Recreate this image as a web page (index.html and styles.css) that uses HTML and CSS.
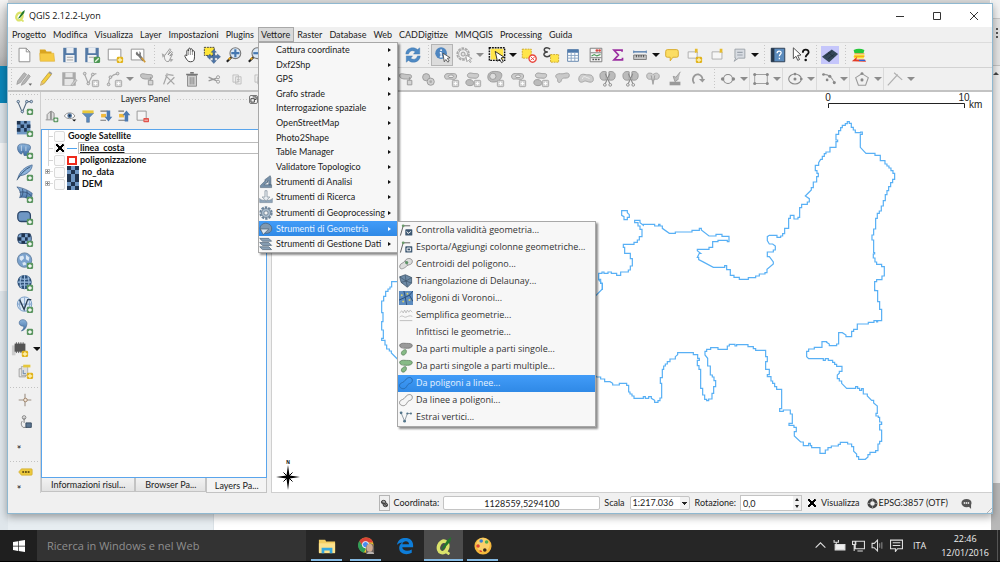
FILE: index.html
```html
<!DOCTYPE html>
<html lang="it">
<head>
<meta charset="utf-8">
<title>QGIS 2.12.2-Lyon</title>
<link rel="stylesheet" href="styles.css">
</head>
<body>
<svg class="sprite" aria-hidden="true">
  <defs>
    <linearGradient id="g-blue" x1="0" y1="0" x2="0" y2="1"><stop offset="0" stop-color="#8db4dc"/><stop offset="1" stop-color="#3f6ea3"/></linearGradient>
    <pattern id="chess" width="8" height="8" patternUnits="userSpaceOnUse"><rect width="8" height="8" fill="#6f97c4"/><path d="M0 0h4v4H0zM4 4h4v4H4z" fill="#1f3450"/></pattern>
    <g id="plus"><rect x="12" y="12" width="7" height="7" rx="1.5" fill="#5a9560"/><path d="M15.500 13.500v4M13.500 15.500h4" stroke="#fff" stroke-width="1.500"/></g>
    <g id="star"><rect x="12" y="12" width="7" height="7" rx="1.500" fill="#e0b21c"/><path d="M15.500 13v5M13 15.500h5" stroke="#fff3b0" stroke-width="1.500"/></g>
    <g id="gbox"><rect x="11.500" y="11.500" width="7" height="7" rx="1" fill="#d6d6d6" stroke="#a4a4a4"/><path d="M15 13v4M13 15h4" stroke="#fff"/></g>
    <g id="blob"><path d="M3 4c3-2 5 0 8 0s6-1 6 3-4 4-6 3-3 1-3 4-4 3-4 0 2-3 1-5-4-3-2-5z"/></g>
  </defs>
  <symbol id="i-new" viewBox="0 0 20 20"><path d="M4.500 2.500h8l4 4v11h-12z" fill="#fff" stroke="#888"/><path d="M12.500 2.500v4h4" fill="none" stroke="#888"/></symbol>
  <symbol id="i-open" viewBox="0 0 20 20"><path d="M2 4h6l1.500 2H15v3H6l-4 7z" fill="#d9a520"/><path d="M2 8h15.500l1 9H2.500z" fill="#f6cb45" stroke="#dca92a" stroke-width=".6"/></symbol>
  <symbol id="i-save" viewBox="0 0 20 20"><path d="M2.500 2h15v16h-15z" fill="#5379a5"/><path d="M6 2h8v6H6z" fill="#e9edf2"/><path d="M5 10h10v8H5z" fill="#f4f4f4"/><path d="M6.500 12.500h7M6.500 15.500h7" stroke="#999"/></symbol>
  <symbol id="i-saveas" viewBox="0 0 20 20"><path d="M2.500 2h15v16h-15z" fill="#5379a5"/><path d="M6 2h8v6H6z" fill="#e9edf2"/><path d="M5 10h10v8H5z" fill="#f4f4f4"/><path d="M6.500 12.500h6" stroke="#999"/><rect x="12" y="12" width="7" height="7" rx="1.500" fill="#4c9654"/><path d="M13.500 17.500l4-4" stroke="#e5f4dd" stroke-width="1.500"/></symbol>
  <symbol id="i-composer" viewBox="0 0 20 20"><path d="M2.500 3.500h14v12h-14z" fill="#fff" stroke="#8c8c8c"/><use href="#star"/></symbol>
  <symbol id="i-manager" viewBox="0 0 20 20"><path d="M2.500 3.500h14v12h-14z" fill="#fff" stroke="#8c8c8c"/><path d="M9 6c-2 1-2 4 1 5l5 6 2-1-4-6c1-2 0-4-2-4l1 2-1.500 1z" fill="#777"/><path d="M14 13l4 5" stroke="#d09a38" stroke-width="2"/></symbol>
  <symbol id="i-touch" viewBox="0 0 20 20"><path d="M6 11l6-8 1 1-3 6 4-4 1 1-3 4 3-2-4 8c-3 1-5-1-5-6z" fill="#f3f3f3" stroke="#888" stroke-width=".9"/><path d="M3 8l4 2-3 3zM12 14l4 1-3 3z" fill="#aaa"/></symbol>
  <symbol id="i-pan" viewBox="0 0 20 20"><path d="M6.500 11V5.500c0-1.500 2-1.500 2 0V3.500c0-1.500 2-1.500 2 0V4c.5-1.500 2.200-1 2.200.5V6c.6-1.200 2.300-.8 2.300.7V12c0 4-1 5.500-4.500 5.500-3 0-3.500-1.500-6-5.500-1-1.800.8-2.600 2-1z" fill="#fff" stroke="#333"/><path d="M8.500 5v5M10.500 4v6M12.700 5v5" stroke="#666" stroke-width=".7"/></symbol>
  <symbol id="i-pansel" viewBox="0 0 20 20"><path d="M1.500 1.500h11v9h-11z" fill="#ffe638" stroke="#333" stroke-dasharray="2 1"/><path d="M12 4l3 3h-2v3.500h3V9l3.500 3-3.500 3v-2h-3v3h2l-3 3.500L9 16h2v-3H8v2l-3.500-3L8 9v2h3V7H9z" fill="#4b74a8" stroke="#27476f" stroke-width=".4"/></symbol>
  <symbol id="i-zoomin" viewBox="0 0 20 20"><circle cx="11.500" cy="8" r="6" fill="#dbe8f5" stroke="#777" stroke-width="1.200"/><path d="M11.500 3.500v9M7 8h9" stroke="#4577b0" stroke-width="2.400"/><path d="M7 12.500L2 17.500" stroke="#222" stroke-width="2.400"/><path d="M6 13l-2 2" stroke="#e0a526" stroke-width="2"/></symbol>
  <symbol id="i-zoomout" viewBox="0 0 20 20"><circle cx="11.500" cy="8" r="6" fill="#dbe8f5" stroke="#777" stroke-width="1.200"/><path d="M7 8h9" stroke="#4577b0" stroke-width="2.400"/><path d="M7 12.500L2 17.500" stroke="#222" stroke-width="2.400"/><path d="M6 13l-2 2" stroke="#e0a526" stroke-width="2"/></symbol>
  <symbol id="i-refresh" viewBox="0 0 20 20"><path d="M2 9c0-7 9-9 13-5l2.500-2v7h-7l2-2.500C9.500 4 6 5.500 5 9zM18 11c0 7-9 9-13 5l-2.500 2v-7h7l-2 2.500c3 2.500 6.500 1 7.500-2.500z" fill="#4f8ac4" stroke="#3a6fa6" stroke-width=".4"/></symbol>
  <symbol id="i-identify" viewBox="0 0 20 20"><circle cx="9" cy="8" r="6.500" fill="#4f86c0"/><path d="M9 7v5M7.500 7.500H9M7.500 12h3" stroke="#fff" stroke-width="1.400"/><circle cx="9" cy="4.600" r="1" fill="#fff"/><path d="M11 8l8 5-3 .7 2 3-1.500 1.300-2.200-3-1.800 2.500z" fill="#fff" stroke="#444" stroke-width=".9"/></symbol>
  <symbol id="i-action" viewBox="0 0 20 20"><circle cx="9" cy="9" r="6.500" fill="none" stroke="#aaa" stroke-width="2" stroke-dasharray="3 1"/><circle cx="9" cy="9" r="5" fill="#eee" stroke="#aaa"/><circle cx="9" cy="9" r="2.200" fill="#e2e2e2" stroke="#999"/><path d="M12 10l7 4-3 .7 2 3-1 .8-2-3-1.800 2z" fill="#fff" stroke="#999" stroke-width=".9"/></symbol>
  <symbol id="i-select" viewBox="0 0 20 20"><path d="M3 3h14v12H3z" fill="#ffe54a"/><path d="M1.500 2h17v14h-17z" fill="none" stroke="#111" stroke-width="1.600" stroke-dasharray="2 1"/><path d="M8 6l10 6.500-3.500.8 2.500 4-2 1.200-2.300-4-2.200 2.500z" fill="#fff" stroke="#222"/></symbol>
  <symbol id="i-deselect" viewBox="0 0 20 20"><path d="M2.500 3.500h10v10h-10z" fill="#ffe54a" stroke="#c9a52a" stroke-dasharray="2 1"/><circle cx="14" cy="14" r="4" fill="#fff" stroke="#e8453c" stroke-width="1.500"/><path d="M11.500 16l5-4M12 12l4 4" stroke="#e8453c"/></symbol>
  <symbol id="i-expr" viewBox="0 0 20 20"><path d="M9 3.500C5.500.500 1 2.500 3 5.500c.7 1 2 1.200 3.500 1.200C2.500 6.700 1.500 8.700 2.500 10.500s5 2 7-.5" fill="none" stroke="#444" stroke-width="1.700"/><path d="M9.500 9.500h9v8.500h-9z" fill="#ffe54a" stroke="#c9a52a" stroke-dasharray="2 1"/></symbol>
  <symbol id="i-table" viewBox="0 0 20 20"><path d="M4 4h12v13H4z" fill="#fff" stroke="#5b7fa9"/><path d="M4 4h12v3.500H4z" fill="#4e79ab"/><path d="M4 10.500h12M4 13.500h12M8 7v10M12 7v10" stroke="#87a3c3"/></symbol>
  <symbol id="i-calc" viewBox="0 0 20 20"><path d="M3.500 2.500h13v15h-13z" fill="#f5f5f5" stroke="#777"/><path d="M4 7.500h12M4 13h12" stroke="#777"/><circle cx="11" cy="5" r="1.500" fill="#d4453d"/><circle cx="14" cy="5" r="1.500" fill="#d4453d"/><path d="M5 11l3-1.500 3 1.500 4-1.500" stroke="#4a9a57" fill="none" stroke-width="1.300"/><path d="M6 15h8" stroke="#555" stroke-width="1.500" stroke-dasharray="2 1"/></symbol>
  <symbol id="i-sum" viewBox="0 0 20 20"><path d="M14.500 6.500V4.500h-9l5 5.500-5 5.500h9.500v-2.500" fill="none" stroke="#9b2fa0" stroke-width="1.900"/></symbol>
  <symbol id="i-measure" viewBox="0 0 20 20"><path d="M3 6.500h14" stroke="#4e79ab" stroke-width="1.500"/><path d="M3 5v3M17 5v3" stroke="#4e79ab"/><path d="M3 10h14v5H3z" fill="#c6c6c6" stroke="#777"/><path d="M6 10v2.500M8.700 10v2.500M11.300 10v2.500M14 10v2.500" stroke="#444"/></symbol>
  <symbol id="i-tip" viewBox="0 0 20 20"><path d="M5 4h10q2 0 2 2v5q0 1.500-2 1.500h-4l-3 4v-4H5q-2 0-2-1.500V6q0-2 2-2z" fill="#fbdd63" stroke="#d5a827"/></symbol>
  <symbol id="i-bmnew" viewBox="0 0 20 20"><path d="M3.500 6.500h10v7h-10z" fill="#f6f6f6" stroke="#aaa"/><path d="M11 3h3v5l-1.500-1L11 8z" fill="#e5bb2e"/><use href="#star"/></symbol>
  <symbol id="i-bm" viewBox="0 0 20 20"><path d="M4.500 6.500h11v8h-11z" fill="#f6f6f6" stroke="#aaa"/><path d="M13 3h3v5l-1.500-1L13 8z" fill="#e5bb2e"/></symbol>
  <symbol id="i-annot" viewBox="0 0 20 20"><path d="M5.500 3.500h11v10h-7l-5 3.500 2-3.500h-1z" fill="#d8dce2" stroke="#9a9fa6"/><path d="M8 7h6M8 10h6" stroke="#9aa2ac" stroke-width="1.300"/></symbol>
  <symbol id="i-help" viewBox="0 0 20 20"><path d="M2.500 2.500h15v15h-15z" fill="#5b8bbd" stroke="#27384c"/><path d="M2.500 2.500h3.500v15H2.500z" fill="#27384c"/><path d="M9 8c0-3 4.500-3 4.500-.5 0 1.500-2 1.800-2 3.800M11.500 13v1.800" stroke="#fff" stroke-width="1.400" fill="none"/></symbol>
  <symbol id="i-what" viewBox="0 0 20 20"><path d="M1.500 2l8.500 8-3.800.5 2.200 4.500-2 1-2-4.500L1.500 14z" fill="#fff" stroke="#444"/><path d="M12 7.500c0-4.500 6.500-4.500 6.500-.5 0 2.500-3.300 2.500-3.300 5.500" fill="none" stroke="#111" stroke-width="2"/><circle cx="15.200" cy="15.500" r="1.400" fill="#111"/></symbol>
  <symbol id="i-plug" viewBox="0 0 20 20"><path d="M0 0h20v20H0z" fill="#c5c6fb"/><path d="M1 12l11-8 7 5-10 9z" fill="#33475b"/><path d="M5 11l7-5M8 14l7-5M8 7l6 5" stroke="#1f2b38" stroke-width=".8"/></symbol>
  <symbol id="i-layers3" viewBox="0 0 20 20"><path d="M4 4.500q6-3 12 0l-1 3.500H5z" fill="#25c83a"/><path d="M5 9.500h11v1.500l-1 3H5l-1-2z" fill="#fbe02a"/><path d="M5 8.500h11M5 11.500h11" stroke="#ee8a1f" stroke-width=".8"/><path d="M2 17l6-5-1 3h9l2 2.500z" fill="#e43a25"/><path d="M10 16h7" stroke="#2d62d6" stroke-width="1.300"/></symbol>

  <symbol id="i-edits" viewBox="0 0 20 20"><path d="M2 16l1-4 7-9 3 2-7 9zM7 17l1-3 7-9 2 2-6 8z" fill="#b5b5b5" stroke="#8e8e8e" stroke-width=".7"/><path d="M15 15h4l-2 2.500z" fill="#666"/></symbol>
  <symbol id="i-pencil" viewBox="0 0 20 20"><path d="M4 17l1-4 8-10 3 2-8 10z" fill="#f4cf3f" stroke="#a8862a" stroke-width=".7"/><path d="M4 17l1-4 2.500 2z" fill="#d8b78a"/><path d="M13 3l3 2 1-1.500-3-2z" fill="#999"/></symbol>
  <symbol id="i-gsave" viewBox="0 0 20 20"><path d="M2.500 2.500h15v15h-15z" fill="#aaa"/><path d="M6 3h8v5H6zM5 10h10v7H5z" fill="#e6e6e6"/><path d="M12 17l5-7 2 1.500-5 6z" fill="#ccc" stroke="#999" stroke-width=".6"/></symbol>
  <symbol id="i-node" viewBox="0 0 20 20"><path d="M3 5l4 10L12 5l4-1" fill="none" stroke="#aaa" stroke-width="1.300"/><g fill="#ddd" stroke="#999"><circle cx="3" cy="4" r="1.500"/><circle cx="7" cy="15" r="1.500"/><circle cx="12" cy="5" r="1.500"/></g><use href="#gbox"/></symbol>
  <symbol id="i-curve" viewBox="0 0 20 20"><path d="M4 16C4 9 8 5 14 4" fill="none" stroke="#aaa" stroke-width="1.300"/><g fill="#ddd" stroke="#999"><circle cx="4" cy="16" r="1.500"/><circle cx="6" cy="8" r="1.500"/><circle cx="14" cy="4" r="1.500"/></g><use href="#gbox"/></symbol>
  <symbol id="i-gblob" viewBox="0 0 20 20"><path d="M3 5c2-2 5 0 8 0s6 0 5 3-4 2-7 2-7-1-6-5z" fill="#c4c4c4" stroke="#999"/><path d="M11.500 11.500h5v5h-5z" fill="#d5d5d5" stroke="#999"/><path d="M14 8v3" stroke="#999" stroke-width="1.500"/></symbol>
  <symbol id="i-gnode" viewBox="0 0 20 20"><path d="M4 16L8 5l7 1M6 6l10 10M16 8L8 16" fill="none" stroke="#a5a5a5" stroke-width="1.400"/><circle cx="8" cy="5" r="1.500" fill="#bbb"/></symbol>
  <symbol id="i-trash" viewBox="0 0 20 20"><path d="M5 6h10v12H5z" fill="#cfcfcf" stroke="#888"/><path d="M3.500 5h13M8 3h4" stroke="#777" stroke-width="1.600"/><path d="M8 8v8M10 8v8M12 8v8" stroke="#888"/></symbol>
  <symbol id="i-cut" viewBox="0 0 20 20"><path d="M4 8l9 4M4 12l9-3" stroke="#999" stroke-width="1.500"/><circle cx="14.500" cy="8" r="1.700" fill="none" stroke="#999"/><circle cx="14.500" cy="13" r="1.700" fill="none" stroke="#999"/></symbol>
  <symbol id="i-copy" viewBox="0 0 20 20"><path d="M5.500 5.500h6v8h-6zM8.500 7.500h6v8h-6z" fill="#eee" stroke="#bcbcbc"/><path d="M10 10.500h3M10 12.500h3" stroke="#bbb"/></symbol>
  <symbol id="i-donut" viewBox="0 0 20 20"><circle cx="8" cy="8" r="4" fill="#c4c4c4" stroke="#999"/><circle cx="13" cy="13" r="4" fill="#d0d0d0" stroke="#999"/><circle cx="13" cy="13" r="1.500" fill="#aaa"/></symbol>
  <symbol id="i-gring" viewBox="0 0 20 20"><path d="M3 8c-1-5 5-4 8-4s6 0 5 4-5 2-8 2-4 1-5-2z" fill="#ccc" stroke="#999"/><ellipse cx="10" cy="7" rx="3" ry="1.500" fill="#f0f0f0" stroke="#999"/><use href="#gbox"/></symbol>
  <symbol id="i-gtwo" viewBox="0 0 20 20"><path d="M4 5c2-3 5-1 8-1s5 0 4 3-4 2-7 2-6-1-5-4z" fill="#ccc" stroke="#999"/><path d="M2 14c0-3 3-4 6-3s4 5 1 6-7 0-7-3z" fill="#bbb" stroke="#999"/><use href="#gbox"/></symbol>
  <symbol id="i-gbig" viewBox="0 0 20 20"><path d="M1 9c-1-8 7-8 12-7s4 6 1 9-12 4-13-2z" fill="#bbb" stroke="#999"/><circle cx="6.500" cy="7" r="3.500" fill="#ddd" stroke="#999"/><use href="#gbox"/></symbol>
  <symbol id="i-gshape" viewBox="0 0 20 20"><path d="M3 5c3-2 5 0 8-1s6-1 6 2-3 3-5 3-3 0-4 3-4 2-4 0 0-2-1-3-2-3 0-4z" fill="#c9c9c9" stroke="#a0a0a0"/></symbol>
  <symbol id="i-gbean" viewBox="0 0 20 20"><path d="M2 10c0-4 3-6 7-5s8-1 9 4-3 5-6 4-3-1-5 0-5 1-5-3z" fill="#ccc" stroke="#a0a0a0"/><path d="M6 10c0-3 3-3 4-2s3 0 4 2" fill="none" stroke="#eee"/></symbol>
  <symbol id="i-gsplit" viewBox="0 0 20 20"><path d="M1 6c0-4 4-5 7-4v9c-4 1-7 0-7-5zM18 6c0-4-4-5-7-4v9c4 1 7 0 7-5z" fill="#bbb" stroke="#999"/><path d="M7 4l5 11M12 4L7 15" stroke="#888" stroke-width="1.200"/><circle cx="6.500" cy="16.500" r="1.500" fill="none" stroke="#888"/><circle cx="12.500" cy="16.500" r="1.500" fill="none" stroke="#888"/></symbol>
  <symbol id="i-gmerge" viewBox="0 0 20 20"><path d="M3 7c0-4 3-4 6-3l1 1c4-3 7-1 7 2s-3 4-5 3l-2 2-2-2c-2 1-5 0-5-3z" fill="#ccc" stroke="#a0a0a0"/><path d="M8 6l2 10 2-10" fill="none" stroke="#999"/></symbol>
  <symbol id="i-gstamp" viewBox="0 0 20 20"><path d="M16 2l-5 6-3-1 2 6 4-3" fill="#bbb" stroke="#999"/><path d="M4 13h12v4H4z" fill="#999"/></symbol>
  <symbol id="i-grot" viewBox="0 0 20 20"><path d="M6 15c-4-5 0-11 5-10 3 1 4 3 4 6" fill="none" stroke="#999" stroke-width="2"/><path d="M11 10h7l-3 4z" fill="#999"/></symbol>
  <symbol id="i-ccirc" viewBox="0 0 20 20"><circle cx="10" cy="10" r="5" fill="none" stroke="#888" stroke-width="1.200"/><circle cx="4" cy="10" r="1.900" fill="#888"/><circle cx="16" cy="10" r="1.900" fill="#888"/></symbol>
  <symbol id="i-crect" viewBox="0 0 20 20"><path d="M3 5h14v10H3z" fill="none" stroke="#999"/><g fill="#888"><circle cx="3" cy="5" r="1.700"/><circle cx="17" cy="5" r="1.700"/><circle cx="3" cy="15" r="1.700"/><circle cx="17" cy="15" r="1.700"/></g></symbol>
  <symbol id="i-cell" viewBox="0 0 20 20"><ellipse cx="10" cy="10" rx="7" ry="5.500" fill="none" stroke="#888" stroke-width="1.200"/><g fill="#888"><circle cx="10" cy="4.500" r="1.500"/><circle cx="10" cy="10" r="1.700"/><circle cx="17" cy="10" r="1.500"/></g></symbol>
  <symbol id="i-carc" viewBox="0 0 20 20"><path d="M4 5c6-1 12 4 13 10" fill="none" stroke="#999" stroke-width="1.200"/><g fill="#888"><circle cx="5" cy="5" r="1.500"/><circle cx="12" cy="7" r="1.700"/><circle cx="17" cy="14" r="1.700"/><circle cx="9" cy="11" r="1.500"/></g></symbol>
  <symbol id="i-cpoly" viewBox="0 0 20 20"><path d="M10 4l7 4.500-3 8.500H6L3 8.500z" fill="none" stroke="#999" stroke-width="1.200"/><g fill="#888"><circle cx="10" cy="4" r="1.600"/><circle cx="10" cy="11" r="1.700"/></g></symbol>
  <symbol id="i-cline" viewBox="0 0 20 20"><path d="M2 17L13 5M9 3l9 8" fill="none" stroke="#b0b0b0" stroke-width="1.300"/></symbol>

  <symbol id="i-vec" viewBox="0 0 20 20"><path d="M2 4l5 12 5-12h5" fill="none" stroke="#52687f" stroke-width="1.200"/><g fill="#c3d5e8" stroke="#52687f"><circle cx="2.500" cy="4" r="1.400"/><circle cx="7" cy="15" r="1.400"/><circle cx="12" cy="4" r="1.400"/><circle cx="17" cy="4" r="1.400"/></g><use href="#plus"/></symbol>
  <symbol id="i-ras" viewBox="0 0 20 20"><path d="M1 1h15v15H1z" fill="#6f97c4"/><path d="M1 1h4v4H1zM9 1h3v3H9zM5 5h4v4H5zM12 5h4v4h-4zM1 9h4v4H1zM9 9h3v4H9z" fill="#1f3450"/><use href="#plus"/></symbol>
  <symbol id="i-pg" viewBox="0 0 20 20"><path d="M2 5c1-4 8-3 11-2 4 0 4 5 1 7l-1 5H9l-1-5c-1 2-1 4-3 3S1 8 2 5z" fill="url(#g-blue)" stroke="#41658f" stroke-width=".8"/><path d="M6 4v6M11 5v5" stroke="#c3d5e8"/><use href="#plus"/></symbol>
  <symbol id="i-feather" viewBox="0 0 20 20"><path d="M2 16C4 8 10 3 18 1c0 6-6 11-13 12z" fill="#8db4dc" stroke="#41658f" stroke-width=".8"/><path d="M1 18C5 11 10 6 16 3" fill="none" stroke="#31506f"/><use href="#plus"/></symbol>
  <symbol id="i-mssql" viewBox="0 0 20 20"><path d="M1 1c7 1 13 4 17 7l-1 8C11 12 7 12 4 13c2-4 1-8-3-12z" fill="url(#g-blue)" stroke="#34557f" stroke-width=".7"/><path d="M7 3c1 3 1 6-1 9M12 5c1 3 0 6-1 8M4 7c5-1 9 0 13 4" fill="none" stroke="#2b4568" stroke-width=".8"/><use href="#plus"/></symbol>
  <symbol id="i-oracle" viewBox="0 0 20 20"><rect x="2" y="4" width="14" height="11" rx="4" fill="#6f97c4" stroke="#2b4568" stroke-width="1.400"/><use href="#plus"/></symbol>
  <symbol id="i-georas" viewBox="0 0 20 20"><rect x="2" y="4" width="15" height="11" rx="4" fill="#7ea5d0" stroke="#2b4568"/><path d="M6 4h4v4H6zM13 4h3v4h-3zM2 8h4v4H2zM10 8h3v4h-3zM6 12h4v3H6z" fill="#1f3450"/><use href="#plus"/></symbol>
  <symbol id="i-wms" viewBox="0 0 20 20"><circle cx="9.500" cy="9" r="8" fill="#7ba2cd" stroke="#62809f"/><path d="M4 5l4-1 1 3-3 3-2-2zM11 3l4 3-1 4-3-2zM7 12l3-1 2 3-4 1z" fill="#dbe8f5"/><use href="#plus"/></symbol>
  <symbol id="i-wcs" viewBox="0 0 20 20"><circle cx="9.500" cy="9" r="8" fill="#2d5078"/><path d="M2 9h15M9.500 1.500v15M4 4.500q5.500 3 11 0M4 13.500q5.500-3 11 0M6 2.500q-3 6.500 0 13M13 2.500q3 6.500 0 13" fill="none" stroke="#9dbfe2" stroke-width="1.200"/><use href="#plus"/></symbol>
  <symbol id="i-wfs" viewBox="0 0 20 20"><circle cx="9.500" cy="9" r="8" fill="#dbe8f5" stroke="#6f97c4"/><path d="M2 9h15M9.500 1.500v15M5 3q-3 6 0 12M14 3q3 6 0 12" fill="none" stroke="#6f97c4" stroke-width=".8"/><path d="M4 4l5 11 4-11h4" fill="none" stroke="#2c3f55" stroke-width="1.500"/><use href="#plus"/></symbol>
  <symbol id="i-csv" viewBox="0 0 20 20"><path d="M5 2.500c4-2 8 1 7 5-.7 4-3 6-6 7 2-2 3-3.500 2.500-5.500C4 9.500 2 5 5 2.500z" fill="url(#g-blue)" stroke="#41658f" stroke-width=".7"/><use href="#plus"/></symbol>
  <symbol id="i-chip" viewBox="0 0 20 20"><path d="M1 6h4v11H1z" fill="#ccc"/><path d="M4 4h12v9H4z" fill="#555"/><path d="M6 2.500v12M8.500 2.500v12M11 2.500v12M13.500 2.500v12" stroke="#555"/><use href="#star"/></symbol>
  <symbol id="i-gpkg" viewBox="0 0 20 20"><path d="M3.500 7.500h7v9h-7z" fill="#eee" stroke="#999"/><path d="M6 5h7v10H6z" fill="#ddd" stroke="#999" stroke-width=".7"/><path d="M8 3h8v3H8z" fill="#e5c73a"/><path d="M8 9v4h3" stroke="#5b7fa9" fill="none"/><use href="#star"/></symbol>
  <symbol id="i-cross" viewBox="0 0 20 20"><path d="M10 3v14M3 10h14" stroke="#9b8f83" stroke-width="1.200"/><circle cx="10.500" cy="10" r="2" fill="#f5e8dc" stroke="#9b7f63"/></symbol>
  <symbol id="i-tap" viewBox="0 0 20 20"><circle cx="9" cy="5" r="2" fill="none" stroke="#777"/><path d="M9 5v6M7 9c-2 2-1 6 1 7h4" fill="none" stroke="#777"/><path d="M11 11h6v5h-6z" fill="#5b7590" stroke="#34495e"/></symbol>
  <symbol id="i-abc" viewBox="0 0 20 20"><path d="M6 6.500h11q1 0 1 1v5q0 1-1 1H6L3 10z" fill="#ecc93c" stroke="#cda72a" stroke-width=".7"/><path d="M7 10h9" stroke="#6f5a17" stroke-width="2" stroke-dasharray="2 1"/></symbol>

  <symbol id="i-addgrp" viewBox="0 0 20 20"><path d="M3 15V8l5-5v12M9 15V3l4 3v9M1 15.500h12" fill="#ddd" stroke="#888" stroke-width="1.300"/><use href="#plus"/></symbol>
  <symbol id="i-eye" viewBox="0 0 20 20"><path d="M2 10c3-6 12-6 15 0-3 5-12 5-15 0z" fill="#fff" stroke="#888" stroke-width="1.300"/><circle cx="9.500" cy="9.500" r="3.300" fill="#4d7099"/><circle cx="9.500" cy="9.500" r="1.300" fill="#1d2c3d"/><path d="M13 15h6l-3 3z" fill="#111"/></symbol>
  <symbol id="i-filter" viewBox="0 0 20 20"><path d="M2 6h16l-6 6v7H8v-7z" fill="#5b8bbd" stroke="#41658f" stroke-width=".7"/><path d="M2 2h16v4H2z" fill="#e8c83a"/></symbol>
  <symbol id="i-expand" viewBox="0 0 20 20"><path d="M2 3h10M2 16h8" stroke="#777" stroke-width="1.500"/><path d="M3 7h7v5H3z" fill="#f0b93c"/><path d="M11 2h5v9h3l-5.500 7L8 11h3z" fill="#4b79b1"/></symbol>
  <symbol id="i-collapse" viewBox="0 0 20 20"><path d="M2 3h8M2 16h10" stroke="#777" stroke-width="1.500"/><path d="M3 7h7v5H3z" fill="#f0b93c"/><path d="M11 18h5V9h3l-5.500-7L8 9h3z" fill="#4b79b1"/></symbol>
  <symbol id="i-remove" viewBox="0 0 20 20"><path d="M3 3h13v13H3z" fill="#f5f5f5" stroke="#999" stroke-width="1.400"/><rect x="12" y="13" width="8" height="6" rx="1" fill="#e2534b"/><path d="M13.500 16h5" stroke="#fff"/></symbol>

  <symbol id="m-anal" viewBox="0 0 20 20"><path d="M2 18h16v-4H7l6-4-3-3-8 8zM8 7l8-6 1 3v10h-3V8l-3 2z" fill="#7690a8" stroke="#4b6074" stroke-width=".8"/></symbol>
  <symbol id="m-ric" viewBox="0 0 20 20"><path d="M8.500 1h3v9h4L10 15.500 4.500 10h4z" fill="#e8ecf0" stroke="#7e8c99"/><path d="M1 12c2 4 5 1 9 4 4-3 7 0 9-4v6H1z" fill="#8fa5ba" stroke="#5e7387" stroke-width=".7"/></symbol>
  <symbol id="m-gear" viewBox="0 0 20 20"><circle cx="10" cy="10" r="8" fill="none" stroke="#6d859c" stroke-width="3" stroke-dasharray="3.500 1.500"/><circle cx="10" cy="10" r="6.500" fill="#a9bccd" stroke="#5e7387"/><circle cx="10" cy="10" r="3" fill="#f2f2f2" stroke="#5e7387"/></symbol>
  <symbol id="m-geo" viewBox="0 0 20 20"><path d="M3 5c4-6 14-3 15 3s-4 9-9 8S-1 10 3 5z" fill="#7f98b0" stroke="#4b6074"/><path d="M2 10h12l-8 8z" fill="#dce6ef" stroke="#4b6074"/></symbol>
  <symbol id="m-gest" viewBox="0 0 20 20"><path d="M1 2h13l4 4H5zM1 8h13l4 4H5zM1 14h13l4 4H5z" fill="#8aa2b8" stroke="#4b6074"/></symbol>
  <symbol id="s-check" viewBox="0 0 20 20"><path d="M2 18L6 4h10" fill="none" stroke="#555" stroke-width="1.300"/><circle cx="6" cy="4" r="2" fill="#6b9c6b"/><rect x="9" y="9" width="10" height="9" rx="1" fill="#3d5872"/><path d="M11 12l2 3 4-3" fill="none" stroke="#fff" stroke-width="1.300"/></symbol>
  <symbol id="s-col" viewBox="0 0 20 20"><path d="M2 18L6 4h10" fill="none" stroke="#555" stroke-width="1.300"/><circle cx="6" cy="4" r="2" fill="#6b9c6b"/><rect x="9" y="9" width="10" height="9" rx="1" fill="#3d5872"/><path d="M11.500 11.500h5v4h-5z" fill="none" stroke="#fff" stroke-width="1.300"/></symbol>
  <symbol id="s-cent" viewBox="0 0 20 20"><path d="M9 5c3-5 11-3 10 2s-5 3-8 6-10 7-10 0c1-5 5-3 8-8z" fill="#ddd" stroke="#777"/><path d="M9 5c0 3 2 6 4 7" fill="none" stroke="#777"/><circle cx="11" cy="8" r="2.200" fill="#5f9468"/></symbol>
  <symbol id="s-del" viewBox="0 0 20 20"><path d="M1 4l8-3 9 4v8l-6 6-9-7z" fill="#6d8aa6" stroke="#34495e"/><path d="M9 2l1 8 8-5M1 4l9 6 8 3M10 10l2 8M10 10l-7 2" stroke="#34495e" stroke-width=".8" fill="none"/></symbol>
  <symbol id="s-vor" viewBox="0 0 20 20"><path d="M0 0h20v20H0z" fill="#5d8cc0"/><path d="M7 0l2 9-9 4M9 9l6-3 5-6M9 9l2 11M15 6l5 9" stroke="#24456c" fill="none" stroke-width="1.200"/><g fill="#d9d06a"><circle cx="4" cy="6" r="1.400"/><circle cx="12" cy="4" r="1.400"/><circle cx="15" cy="13" r="1.400"/><circle cx="6" cy="15" r="1.400"/></g></symbol>
  <symbol id="s-simp" viewBox="0 0 20 20"><path d="M1 7l3-3 2 3 2-4 2 4 2-4 2 3 2-3 3 3M1 13c4-4 6 1 9 0s5-3 9-1M1 18h18" fill="none" stroke="#aaa"/></symbol>
  <symbol id="s-m2s" viewBox="0 0 20 20"><path d="M2 3c3-2 6-1 9-1s8 0 8 3-4 4-7 4-7 0-9-1-3-4-1-5z" fill="#9a9a9a" stroke="#666"/><path d="M4 18c-2-3 1-6 4-7s3 3 2 5-4 4-6 2z" fill="#86bb86" stroke="#5b7f5b"/></symbol>
  <symbol id="s-s2m" viewBox="0 0 20 20"><path d="M2 3c3-2 6-1 9-1s8 0 8 3-4 4-7 4-7 0-9-1-3-4-1-5z" fill="#86bb86" stroke="#4f7550"/><path d="M4 18c-2-3 1-6 4-7s3 3 2 5-4 4-6 2z" fill="#86bb86" stroke="#4f7550"/></symbol>
  <symbol id="s-p2l" viewBox="0 0 20 20"><path d="M9 6c3-5 10-5 10 0s-4 4-6 6-3 7-8 6-5-5-3-7 4-1 7-5z" fill="none" stroke="#2769ab" stroke-width="1.300"/></symbol>
  <symbol id="s-l2p" viewBox="0 0 20 20"><path d="M9 6c3-5 10-5 10 0s-4 4-6 6-3 7-8 6-5-5-3-7 4-1 7-5z" fill="#f5f5f5" stroke="#888" stroke-width="1.300"/></symbol>
  <symbol id="s-vert" viewBox="0 0 20 20"><path d="M3 4l5 12 4-11h5" fill="none" stroke="#8b959e" stroke-width="1.300"/><g fill="#53758a"><circle cx="3" cy="4" r="2"/><circle cx="8" cy="16" r="2"/><circle cx="12" cy="5" r="1.600"/><circle cx="17" cy="5" r="1.600"/></g></symbol>
  <symbol id="i-qgis" viewBox="0 0 20 20"><ellipse cx="9" cy="11" rx="5" ry="6.500" transform="rotate(20 9 11)" fill="none" stroke="#dbe36b" stroke-width="4"/><path d="M10 15l6 4" stroke="#dbe36b" stroke-width="3"/><path d="M8 12L14 3l4-3-1 5-6 7-4 3z" fill="#22782a"/></symbol>
</svg>

<main class="desktop">
  <div class="backdrop" aria-hidden="true">
    <div class="back-left"><i class="b-tab"></i><i class="b-blue"></i><i class="b-pale"></i><i class="b-white"></i><i class="b-rest"></i></div>
    <div class="back-mid"><i class="b-page"></i></div>
    <div class="back-right"><i class="r-top"></i><i class="r-bar"></i><i class="r-track"></i><i class="r-thumb"></i></div>
  </div>

  <section class="window">
    <header class="titlebar">
      <svg class="app-icon"><use href="#i-qgis"/></svg>
      <h1>QGIS 2.12.2-Lyon</h1>
      <div class="caption">
        <button aria-label="Riduci"><svg viewBox="0 0 10 10"><path d="M1 5.500h8"/></svg></button>
        <button aria-label="Ingrandisci"><svg viewBox="0 0 10 10"><path d="M1.500 1.500h7v7h-7z"/></svg></button>
        <button aria-label="Chiudi"><svg viewBox="0 0 10 10"><path d="M1 1l8 8M9 1l-8 8"/></svg></button>
      </div>
    </header>

    <nav class="menubar">
      <button>Progetto</button><button>Modifica</button><button>Visualizza</button><button>Layer</button><button>Impostazioni</button><button>Plugins</button>
      <div class="menu-host">
        <button class="open">Vettore</button>
        <div class="menu">
          <ul class="plain">
            <li><button>Cattura coordinate</button></li>
            <li><button>Dxf2Shp</button></li>
            <li><button>GPS</button></li>
            <li><button>Grafo strade</button></li>
            <li><button>Interrogazione spaziale</button></li>
            <li><button>OpenStreetMap</button></li>
            <li><button>Photo2Shape</button></li>
            <li><button>Table Manager</button></li>
            <li><button>Validatore Topologico</button></li>
          </ul>
          <ul class="tools">
            <li><button><svg><use href="#m-anal"/></svg>Strumenti di Analisi</button></li>
            <li><button><svg><use href="#m-ric"/></svg>Strumenti di Ricerca</button></li>
            <li><button><svg><use href="#m-gear"/></svg>Strumenti di Geoprocessing</button></li>
            <li class="sub-host"><button class="active"><svg><use href="#m-geo"/></svg>Strumenti di Geometria</button>
              <ul class="submenu">
                <li><button><svg><use href="#s-check"/></svg>Controlla validità geometria...</button></li>
                <li><button><svg><use href="#s-col"/></svg>Esporta/Aggiungi colonne geometriche...</button></li>
                <li><button><svg><use href="#s-cent"/></svg>Centroidi del poligono...</button></li>
                <li><button><svg><use href="#s-del"/></svg>Triangolazione di Delaunay...</button></li>
                <li><button><svg><use href="#s-vor"/></svg>Poligoni di Voronoi...</button></li>
                <li><button><svg><use href="#s-simp"/></svg>Semplifica geometrie...</button></li>
                <li><button><svg></svg>Infittisci le geometrie...</button></li>
                <li><button><svg><use href="#s-m2s"/></svg>Da parti multiple a parti singole...</button></li>
                <li><button><svg><use href="#s-s2m"/></svg>Da parti singole a parti multiple...</button></li>
                <li><button class="active"><svg><use href="#s-p2l"/></svg>Da poligoni a linee...</button></li>
                <li><button><svg><use href="#s-l2p"/></svg>Da linee a poligoni...</button></li>
                <li><button><svg><use href="#s-vert"/></svg>Estrai vertici...</button></li>
              </ul>
            </li>
            <li><button><svg><use href="#m-gest"/></svg>Strumenti di Gestione Dati</button></li>
          </ul>
        </div>
      </div>
      <button>Raster</button><button>Database</button><button>Web</button><button>CADDigitize</button><button>MMQGIS</button><button>Processing</button><button>Guida</button>
    </nav>

    <div class="toolbar">
      <div class="group file">
        <button aria-label="Nuovo"><svg><use href="#i-new"/></svg></button><button aria-label="Apri"><svg><use href="#i-open"/></svg></button><button aria-label="Salva"><svg><use href="#i-save"/></svg></button><button aria-label="Salva come"><svg><use href="#i-saveas"/></svg></button><button aria-label="Nuova stampa"><svg><use href="#i-composer"/></svg></button><button aria-label="Gestore stampe"><svg><use href="#i-manager"/></svg></button>
      </div>
      <div class="group nav">
        <button aria-label="Tocco"><svg><use href="#i-touch"/></svg></button><button aria-label="Sposta mappa"><svg><use href="#i-pan"/></svg></button><button aria-label="Sposta alla selezione"><svg><use href="#i-pansel"/></svg></button><button aria-label="Ingrandisci"><svg><use href="#i-zoomin"/></svg></button><button aria-label="Rimpicciolisci"><svg><use href="#i-zoomout"/></svg></button><button class="far" aria-label="Aggiorna"><svg><use href="#i-refresh"/></svg></button>
      </div>
      <div class="group attr">
        <button class="pressed" aria-label="Informazioni"><svg><use href="#i-identify"/></svg></button><button aria-label="Azione"><svg><use href="#i-action"/></svg></button><i class="drop dim"></i><button aria-label="Seleziona"><svg><use href="#i-select"/></svg></button><i class="drop"></i><button aria-label="Deseleziona"><svg><use href="#i-deselect"/></svg></button><button aria-label="Espressione"><svg><use href="#i-expr"/></svg></button><button aria-label="Tabella"><svg><use href="#i-table"/></svg></button><button aria-label="Calcolatore"><svg><use href="#i-calc"/></svg></button><button aria-label="Statistiche"><svg><use href="#i-sum"/></svg></button><button aria-label="Misura"><svg><use href="#i-measure"/></svg></button><i class="drop"></i><button aria-label="Suggerimenti"><svg><use href="#i-tip"/></svg></button><button aria-label="Nuovo segnalibro"><svg><use href="#i-bmnew"/></svg></button><button aria-label="Segnalibri"><svg><use href="#i-bm"/></svg></button><button aria-label="Annotazione"><svg><use href="#i-annot"/></svg></button><i class="drop"></i>
      </div>
      <div class="group help">
        <button aria-label="Guida"><svg><use href="#i-help"/></svg></button><button aria-label="Cos'è"><svg><use href="#i-what"/></svg></button>
      </div>
      <div class="group single"><button aria-label="Plugin"><svg><use href="#i-plug"/></svg></button></div>
      <div class="group single"><button aria-label="Livelli"><svg><use href="#i-layers3"/></svg></button></div>
    </div>

    <div class="toolbar edit">
      <div class="group digit">
        <button aria-label="Modifiche"><svg><use href="#i-edits"/></svg></button><button aria-label="Modifica"><svg><use href="#i-pencil"/></svg></button><button aria-label="Salva modifiche"><svg><use href="#i-gsave"/></svg></button><button aria-label="Aggiungi elemento"><svg><use href="#i-node"/></svg></button><button aria-label="Aggiungi curva"><svg><use href="#i-curve"/></svg></button><i class="drop dim"></i><button aria-label="Muovi"><svg><use href="#i-gblob"/></svg></button><button aria-label="Nodi"><svg><use href="#i-gnode"/></svg></button><button aria-label="Elimina"><svg><use href="#i-trash"/></svg></button><button aria-label="Taglia"><svg><use href="#i-cut"/></svg></button><button aria-label="Copia"><svg><use href="#i-copy"/></svg></button><button aria-label="Incolla"><svg><use href="#i-copy"/></svg></button>
      </div>
      <div class="group adv">
        <button aria-label="Ruota"><svg><use href="#i-gblob"/></svg></button><button aria-label="Semplifica"><svg><use href="#i-donut"/></svg></button><button aria-label="Aggiungi buco"><svg><use href="#i-gring"/></svg></button><button aria-label="Aggiungi parte"><svg><use href="#i-gtwo"/></svg></button><button aria-label="Riempi buco"><svg><use href="#i-gbig"/></svg></button><button aria-label="Elimina buco"><svg><use href="#i-gring"/></svg></button><button aria-label="Elimina parte"><svg><use href="#i-gtwo"/></svg></button><button aria-label="Modella"><svg><use href="#i-gshape"/></svg></button><button aria-label="Offset"><svg><use href="#i-gbean"/></svg></button><button aria-label="Spezza"><svg><use href="#i-gsplit"/></svg></button><button aria-label="Spezza parti"><svg><use href="#i-gsplit"/></svg></button><button aria-label="Fondi"><svg><use href="#i-gmerge"/></svg></button><button aria-label="Fondi attributi"><svg><use href="#i-gstamp"/></svg></button><button aria-label="Ruota simboli"><svg><use href="#i-grot"/></svg></button>
      </div>
      <div class="group cad">
        <span class="pair"><button aria-label="Cerchio"><svg><use href="#i-ccirc"/></svg></button><i class="drop dim"></i></span>
        <span class="pair"><button aria-label="Rettangolo"><svg><use href="#i-crect"/></svg></button><i class="drop dim"></i></span>
        <span class="pair"><button aria-label="Ellisse"><svg><use href="#i-cell"/></svg></button><i class="drop dim"></i></span>
        <span class="pair"><button aria-label="Arco"><svg><use href="#i-carc"/></svg></button><i class="drop dim"></i></span>
        <span class="pair"><button aria-label="Poligono"><svg><use href="#i-cpoly"/></svg></button><i class="drop dim"></i></span>
        <span class="pair"><button aria-label="Linea"><svg><use href="#i-cline"/></svg></button><i class="drop dim"></i></span>
      </div>
    </div>

    <div class="workspace">
      <aside class="sidebar">
        <i class="grip"></i>
        <button aria-label="Vettore"><svg><use href="#i-vec"/></svg></button>
        <button aria-label="Raster"><svg><use href="#i-ras"/></svg></button>
        <button aria-label="PostGIS"><svg><use href="#i-pg"/></svg></button>
        <button aria-label="SpatiaLite"><svg><use href="#i-feather"/></svg></button>
        <button aria-label="MSSQL"><svg><use href="#i-mssql"/></svg></button>
        <button aria-label="Oracle"><svg><use href="#i-oracle"/></svg></button>
        <button aria-label="Oracle raster"><svg><use href="#i-georas"/></svg></button>
        <button aria-label="WMS"><svg><use href="#i-wms"/></svg></button>
        <button aria-label="WCS"><svg><use href="#i-wcs"/></svg></button>
        <button aria-label="WFS"><svg><use href="#i-wfs"/></svg></button>
        <button aria-label="Testo delimitato"><svg><use href="#i-csv"/></svg></button>
        <span class="pair side"><button aria-label="Nuovo layer"><svg><use href="#i-chip"/></svg></button><i class="drop"></i></span>
        <button aria-label="GeoPackage"><svg><use href="#i-gpkg"/></svg></button>
        <i class="grip low"></i>
        <button aria-label="Coordinate"><svg><use href="#i-cross"/></svg></button>
        <button aria-label="Tocca"><svg><use href="#i-tap"/></svg></button>
        <span class="more">»</span>
        <i class="grip low"></i>
        <button class="short" aria-label="Etichette"><svg><use href="#i-abc"/></svg></button>
        <span class="more">»</span>
      </aside>

      <section class="panel">
        <div class="panel-title"><i class="dots"></i><h2>Layers Panel</h2><i class="dots"></i><button aria-label="Sgancia"><svg viewBox="0 0 8 8"><path d="M3 1h4v3H5.500M1 3h4v4H1z"/></svg></button></div>
        <div class="panel-tools">
          <button aria-label="Aggiungi gruppo"><svg><use href="#i-addgrp"/></svg></button><button aria-label="Visibilità"><svg><use href="#i-eye"/></svg></button><button aria-label="Filtra"><svg><use href="#i-filter"/></svg></button><button aria-label="Espandi"><svg><use href="#i-expand"/></svg></button><button aria-label="Comprimi"><svg><use href="#i-collapse"/></svg></button><button aria-label="Rimuovi"><svg><use href="#i-remove"/></svg></button>
        </div>
        <ul class="tree">
          <li><i class="branch"></i><input type="checkbox" id="l1"><label for="l1">Google Satellite</label></li>
          <li><i class="branch"></i><input type="checkbox" id="l2" checked><i class="sym line"></i><label for="l2" class="current">linea_costa</label></li>
          <li><i class="branch"></i><input type="checkbox" id="l3"><i class="sym poly"></i><label for="l3">poligonizzazione</label></li>
          <li><i class="branch plus"></i><input type="checkbox" id="l4"><svg class="sym-r" viewBox="0 0 12 12"><rect width="12" height="12" fill="url(#chess)"/></svg><label for="l4">no_data</label></li>
          <li><i class="branch plus"></i><input type="checkbox" id="l5"><svg class="sym-r" viewBox="0 0 12 12"><rect width="12" height="12" fill="url(#chess)"/></svg><label for="l5">DEM</label></li>
        </ul>
        <div class="tabs"><button>Informazioni risul...</button><button>Browser Pa...</button><button class="on">Layers Pa...</button></div>
      </section>

      <section class="map">
        <svg viewBox="272 92 719 400" preserveAspectRatio="xMinYMin meet">
          <g class="coast" transform="translate(590 110) scale(.3333)">
            <path d="M37 540V520H32V508H26V490H36V486H42V490H54V486H64V490H80V496H92V486H115V480H121V468H127V446H121V430H104V412H100V403H132V397H142V390H148V380H156V358H150V348H144V338H134V331H150V338L160 346V343H194V348H206V343H210V348H217V355L238 370H256V366H306V361H328V355H334V360L357 378H378V373H396V379H417V395H412V391H384V395H368V412H357V418H322V422L332 430H328L322 442H326V449L338 455L370 472H404V467H410V479H421V496H432V502H448V508H475V503H497V498H508V492H525V488H531V478L550 462V456L538 440H532V426H550V420H556V408L548 402H538L532 392V380L538 376H561V382H572V378H578V371H584V355H596V325H601V316H612V327H624V322H629V293H635V283H652V276H658V266L646 258L664 240V233H670V216H680V200H685V190H681V182H676V166H686V158L692 148H697V139H703V131H708V126H720V112H738V95H743V90H738V73H746V62H752V53H757V46H766V41H772V35H778V40H784V52H790V60H796V68H812V66H817V73H811V112L828 130H855V136H871V152H885V162H891V168H897V174H903V182H909V190H914V208H908V218H902V230H896V242H891V254H886V272H880V288H874V303H868V310H862V325H857V357H851V375H846V390H851V428H854V432H850V444H855V456H860V463H875V470H883V498H876V509H860V515H854V542"/>
            <path d="M95 302H112V308L118 314V322H112V329H102V320L95 316Z"/>
          </g>
          <g class="coast" transform="translate(590 280) scale(.3333)">
            <path d="M854 28V32H863V65H869V88H875V122H863V126H860V122H852V127H835V132H802V148H791V154H785V170H768V165L757 158H746V192H740V197H718V192L710 187V185H696V202H673V207H656V214H650V230L656 236H700V241H706V236H715V241H728V247H734V253H740V259H756V274H748V280L742 285V296H748V303H755V310L770 325H797V320H803V325H809V331H815V326H820V342H832V348L845 361H851V369L862 378V400H858V408H865V412H869V426H875V433H869V450H875V484H869V492H864V512H857V517H840V524H834V531L826 538H806V530H800V522L791 514V500H785V492H773V487H751V493H745V498H724V503H714V510H706V520H690V503H665V497H661V490H656V497H640V486H632L613 468V455H619V442H612V436H597V430H607V402H601V390H580V394H569V386H575V328H560V320H554V310H548V303H543V290H532V284H538V268H527V245H532V230H527V211H497V206H490V200H474V194H440V198H435V193H418V198H412V208H384V203H362V208H350V214H345V225L353 235V258H361V285H367V291H372V302H377V320H371V340H366V357H356V362H350V358H344V345H338V325H332V268H327V257H322V241H328V235H323V224H310V218H263V224L256 230V237H240V245H232V252H226V258H221V268H217V293H211V310H215V354H210V362H204V367H194V361L184 355V350H176V355H166V350H160V355H132V348H126V342H120V336H116V316H110V310H88V315H68V310L60 305H44V297H32V291H20L10 280"/>
            <path d="M26 0L32 5V10H37V27L18 46H10"/>
          </g>
          <path class="coast" transform="translate(380 215) scale(.3333)" d="M60 200H35V216H30V222H24V229H17V244H11V258H5V293H9V320H5V345H10V370H5V376H15V390H20V402H28V408H34V414L52 432"/>
          <path class="scale" d="M828.500 108v-4.500h136v4.500"/>
          <text class="sc" x="828" y="101" text-anchor="middle">0</text><text class="sc" x="964" y="101" text-anchor="middle">10</text><text class="sc" x="969" y="108">km</text>
          <text class="north" x="288" y="464" text-anchor="middle">N</text>
          <path d="M288 465l1.500 10.500L300 477l-10.500 1.500L288 490l-1.500-11.500L276 477l10.500-1.500z" fill="#000"/>
          <path d="M283.500 472.500l9 9M292.500 472.500l-9 9" stroke="#000"/><circle cx="288" cy="477" r="2.500"/>
        </svg>
      </section>
    </div>

    <footer class="status">
      <button class="toggle" aria-label="Estensione"><svg viewBox="0 0 10 10"><ellipse cx="4" cy="3.500" rx="2.500" ry="2" fill="#aaa" stroke="#333"/><ellipse cx="6" cy="6.500" rx="2.500" ry="2" fill="#888" stroke="#333"/><path d="M2 3l6 5" stroke="#333"/></svg></button>
      <label for="coord">Coordinata:</label><input id="coord" class="coord" value="1128559,5294100">
      <label for="scale">Scala</label><select id="scale"><option>1:217.036</option></select>
      <label for="rot">Rotazione:</label><span class="spin"><input id="rot" value="0,0"><span><button aria-label="Aumenta"></button><button aria-label="Diminuisci"></button></span></span>
      <span class="check"><input type="checkbox" id="vis" checked><label for="vis">Visualizza</label></span>
      <button class="epsg"><svg viewBox="0 0 12 12"><circle cx="6" cy="6" r="4" fill="none" stroke="#444" stroke-width="3"/><path d="M6 0v3M6 9v3M0 6h3M9 6h3" stroke="#999"/></svg>EPSG:3857 (OTF)</button>
      <button class="msg" aria-label="Messaggi"><svg viewBox="0 0 12 12"><ellipse cx="6" cy="5.500" rx="5.500" ry="4.500" fill="#555"/><path d="M7 8l4 4V7z" fill="#555"/><path d="M3 5.500h6" stroke="#fff" stroke-width="1.500" stroke-dasharray="1.500 .7"/></svg></button>
      <i class="sizegrip"></i>
    </footer>
  </section>
</main>

<footer class="taskbar">
  <button class="start" aria-label="Start"><svg viewBox="0 0 14 14"><path d="M1 3l5-.8v4.500H1zM6.700 2L13 1v5.700H6.700zM1 7.400h5v4.500L1 11zM6.700 7.400H13V13l-6.300-1z" fill="#fff"/></svg></button>
  <input class="search" aria-label="Cerca" placeholder="Ricerca in Windows e nel Web">
  <div class="apps">
    <button class="run" aria-label="Esplora file"><svg viewBox="0 0 20 20"><path d="M1 3h7l1 2h10v12H1z" fill="#f3ce62"/><path d="M1 7h18v11H1z" fill="#fce28c"/><path d="M4 18v-6h12v6h-3v-3H7v3z" fill="#35a8e0"/></svg></button>
    <button class="run" aria-label="Chrome"><svg viewBox="0 0 20 20"><circle cx="10" cy="9" r="8.500" fill="#e8c62f"/><path d="M10 .5A8.500 8.500 0 0 1 18 6H10L6 10 2.600 4.500A8.500 8.500 0 0 1 10 .5z" fill="#db4437"/><path d="M2.600 4.500L7 11l3 2-2.500 4.500A8.500 8.500 0 0 1 2.600 4.500z" fill="#2f9e59"/><circle cx="9.500" cy="8.500" r="3.500" fill="#4a8bf0" stroke="#fff"/><path d="M10 19V12c0-6 9-7 9 0v7z" fill="#6b625e"/><ellipse cx="14" cy="12" rx="3.500" ry="4.500" fill="#cfa990"/><path d="M11 19c0-4 8-4 8 0z" fill="#b9b4b0"/></svg></button>
    <button aria-label="Edge"><svg viewBox="0 0 20 20"><path d="M1 9C2 3 6 1 10.500 1 15.500 1 19 4 19 9v2.500H7c0 4 6 5 10.500 2.500V17.500c-5 3-14 2-14-5.500 0-3 2-5 4-6-3 0-5 1-6.500 3zM7 8h7.500c0-4-6.500-4.500-7.500 0z" fill="#0e7dd8"/></svg></button>
    <button class="run on" aria-label="QGIS"><svg><use href="#i-qgis"/></svg></button>
    <button class="run" aria-label="Paint"><svg viewBox="0 0 20 20"><circle cx="10" cy="10" r="9.500" fill="#f5b83c"/><circle cx="10" cy="8.500" r="7.500" fill="#f9d069"/><circle cx="8" cy="4.500" r="2" fill="#3d7fd0"/><circle cx="4.500" cy="10" r="2" fill="#dc4433"/><circle cx="14" cy="5.500" r="2" fill="#4fae50"/><circle cx="12" cy="14.500" r="2" fill="#3a2a18"/><path d="M6 15c1-1 3 0 3 1s-3 1-3-1z" fill="#dc4433"/></svg></button>
  </div>
  <div class="tray">
    <svg viewBox="0 0 12 12"><path d="M1.500 8L6 3.500 10.500 8"/></svg>
    <svg viewBox="0 0 12 12"><path d="M2 5h9v5H2z" fill="#eee"/><path d="M1 1v2h4V1M3 3v2"/></svg>
    <svg viewBox="0 0 12 12"><path d="M3 2h8.500v7H3zM5 11h5M0.500 2h3v3h-3zM2 5v6"/></svg>
    <svg viewBox="0 0 12 12"><path d="M1 4h2l3-3v10L3 8H1z"/><path d="M8 4v4M10 3v6" stroke="#888"/></svg>
    <svg viewBox="0 0 12 12"><path d="M.5 1h11v8H7l-2 2.500V9H.5zM2.500 3.500h7M2.500 6h7"/></svg>
    <span>ITA</span>
  </div>
  <time class="clock"><span>22:46</span><span>12/01/2016</span></time>
</footer>
</body>
</html>
```
FILE: styles.css
```css
* { box-sizing: border-box; }
html, body { height: 100%; }
body {
  margin: 0;
  display: grid;
  grid-template-rows: 1fr 32px;
  font: 9px/12px Lato, "Noto Sans", sans-serif;
  color: #222;
  overflow: hidden;
}
ul { list-style: none; margin: 0; padding: 0; }
h1, h2 { margin: 0; font-size: inherit; font-weight: 400; }
button { border: 0; padding: 0; margin: 0; background: none; font: inherit; color: inherit; white-space: nowrap; }
input, select { font: inherit; color: inherit; margin: 0; min-width: 0; }
svg { display: block; flex: none; }
.sprite { position: absolute; width: 0; height: 0; }

/* desktop and the browser page behind the window */
.desktop { position: relative; display: flex; min-height: 0; }
.backdrop { position: absolute; inset: 0; display: flex; background: #fff; }
.backdrop i { display: block; }
.back-left { flex: none; width: 8px; display: flex; flex-direction: column; }
.b-tab { height: 66px; background: linear-gradient(#f4f4f4, #dcdcdc 30%, #bcbcbc 85%, #aaa); }
.b-blue { height: 37px; background: #0a85b8; }
.b-pale { height: 40px; background: #dbe3e9; }
.b-white { height: 148px; background: #f4f5f6; }
.b-rest { flex: 1; background: #dfe6eb; }
.back-mid { flex: 1; display: flex; background: linear-gradient(#d9d9d9 4px, #fff 4px); }
.b-page { width: 206px; margin-top: 60px; background: #e7edf1; border-right: 1px solid #dbe2e7; }
.back-right { flex: none; width: 10px; display: flex; flex-direction: column; padding-left: 1px; }
.r-top { height: 19px; background: #f2f2f2; border-bottom: 1px solid #c9c9c9; }
.r-bar { height: 47px; background: linear-gradient(#555, #555) 5px 9px / 2px 2px no-repeat, linear-gradient(#555, #555) 5px 13px / 2px 2px no-repeat, linear-gradient(#555, #555) 5px 17px / 2px 2px no-repeat, #e4e4e4; border-bottom: 1px solid #c4c4c4; }
.r-track { flex: 1; background: #ededed; }
.r-track::before { content: ""; display: block; width: 0; margin: 6px 0 0 2px; border: 3px solid transparent; border-bottom-color: #444; border-top: 0; }
.r-thumb { height: 47px; background: #b8b8b8; }

.window {
  position: relative;
  flex: 1;
  min-width: 0;
  margin: 3px 7px 16px 7px;
  display: flex;
  flex-direction: column;
  background: #f0f0f0;
  border: 1px solid #8fb8d0;
  box-shadow: 0 3px 8px rgba(0, 0, 0, .35);
}
.titlebar { height: 23px; flex: none; display: flex; align-items: center; padding-left: 6px; background: #fff; color: #111; font: 9px/14px "Open Sans", sans-serif; }
.app-icon { width: 12px; height: 12px; margin-right: 3px; }
.caption { margin-left: auto; display: flex; }
.caption button { width: 37px; display: grid; place-items: center; }
.caption svg { width: 10px; height: 10px; fill: none; stroke: #333; }

.menubar { height: 16px; flex: none; display: flex; padding-left: 1px; border-bottom: 1px solid #dcdcdc; }
.menubar > button, .menu-host > button { padding: 0 4px 0 3px; line-height: 15px; display: block; height: 15px; }
.menu-host { position: relative; }
.menu-host > .open { background: #d9d9d9; box-shadow: inset 0 0 0 1px #a9a9a9; }

.menu, .submenu { position: absolute; background: #f7f7f7; border: 1px solid #a8a8a8; box-shadow: 2px 2px 2px rgba(0, 0, 0, .45); z-index: 2; }
.menu { top: 100%; left: 0; width: 140px; }
.menu ul { display: grid; grid-auto-rows: 1fr; }
.menu .plain { height: 131px; }
.menu .tools { height: 78px; }
.menu li { display: flex; }
.menu li > button { flex: 1; display: flex; align-items: center; text-align: left; }
.menu > ul > li > button::after { content: ""; margin: 0 6px 0 auto; border: 2px solid transparent; border-left: 3px solid #111; border-right: 0; }
.plain button { padding-left: 17px; }
.tools button svg { width: 14px; height: 14px; margin-right: 3px; }
.menu .active { background: linear-gradient(#429cf8, #2f89e6); color: #e6f2ff; }
.menu > ul > li > button.active::after { border-left-color: #fff; }
.sub-host { position: relative; }
.menu .submenu { top: 0; left: 100%; width: 199px; grid-auto-rows: 17px; font: 9px/14px "Open Sans", sans-serif; color: #333; }
.submenu li > button { padding-left: 1px; }

.toolbar { height: 25px; flex: none; display: flex; align-items: center; border-bottom: 1px solid #d2d2d2; }
.toolbar.edit { height: 24px; border-bottom: 2px solid #c3c3c3; }
.group { display: flex; align-items: center; justify-content: space-between; flex: none; padding-left: 5px; background: radial-gradient(circle, #c6c6c6 1px, transparent 1px) 1px 0 / 3px 3px repeat-y; }
.group button { width: 22px; height: 22px; display: grid; place-items: center; }
.group svg { width: 18px; height: 18px; }
.file { width: 140px; }
.nav { width: 272px; margin-left: 3px; justify-content: flex-start; }
.nav .far { margin-left: auto; }
.attr { width: 334px; margin-left: 2px; }
.group .pressed { background: #dcdcdc; box-shadow: inset 0 0 0 1px #b4b4b4; }
.help { width: 50px; margin-left: 2px; }
.single { width: 27px; margin-left: 2px; }
.drop { width: 10px; height: 22px; flex: none; display: grid; place-items: center; }
.drop::after { content: ""; border: 4px solid transparent; border-top-color: #111; border-bottom: 0; }
.drop.dim::after { border-top-color: #8d8d8d; }
.file, .digit { margin-left: 1px; padding-left: 4px; }
.digit { width: 261px; }
.adv { width: 319px; margin-left: 120px; }
.cad { width: 204px; margin-left: 3px; }
.pair { display: flex; align-items: center; border-right: 1px solid #dadada; }
.pair:last-child { border-right: 0; }

.workspace { flex: 1; min-height: 0; display: flex; }
.sidebar { width: 33px; flex: none; display: flex; flex-direction: column; border-right: 1px solid #cfcfcf; overflow: hidden; }
.sidebar button { height: 22px; width: 22px; margin-left: 6px; flex: none; display: grid; place-items: center; }
.sidebar svg { width: 18px; height: 18px; }
.side { border: 0; flex: none; }
.sidebar .side button { margin-left: 1px; }
.side .drop { margin-left: 1px; }
.grip { height: 3px; margin: 1px 1px 0; flex: none; background: radial-gradient(circle, #c2c2c2 1px, transparent 1px) 0 0 / 3px 3px repeat-x; }
.grip.low { margin-top: 4px; }
.more { align-self: flex-start; height: 11px; line-height: 9px; margin: 12px 0 0 7px; font-size: 8px; font-weight: 900; writing-mode: vertical-rl; flex: none; }
.sidebar .short { height: 15px; }
.sidebar .short + .more { margin-top: 7px; }

.panel { width: 226px; flex: none; display: flex; flex-direction: column; }
.panel-title { display: flex; align-items: center; gap: 6px; height: 12px; margin: 1px 9px 0 3px; }
.panel-title .dots { flex: 1; height: 3px; background: radial-gradient(circle, #cacaca 1px, transparent 1px) 0 0 / 3px 3px; }
.panel-title button { width: 9px; height: 9px; border: 1px solid #777; border-radius: 2px; display: grid; place-items: center; margin-left: -4px; }
.panel-title svg { width: 7px; height: 7px; fill: none; stroke: #333; }
.panel-tools { display: flex; height: 24px; padding: 2px 0 4px 2px; }
.panel-tools button { width: 18px; display: grid; place-items: center; }
.panel-tools svg { width: 14px; height: 14px; }
.tree { flex: 1; background: #fff; border: 1px solid #5aa5ec; font-weight: 700; color: #111; }
.tree li { display: flex; align-items: center; height: 12px; margin-left: 3px; }
.branch { width: 8px; height: 12px; margin-right: 1px; background: linear-gradient(#d4d4d4, #d4d4d4) 3px 0 / 1px 100% no-repeat, linear-gradient(#d4d4d4, #d4d4d4) 3px 6px / 5px 1px no-repeat; }
.branch.plus { background: linear-gradient(#888, #888) 1px 5px / 3px 1px no-repeat, linear-gradient(#888, #888) 2px 4px / 1px 3px no-repeat, linear-gradient(#ddd, #ddd) 5px 5px / 3px 1px no-repeat; }
.branch.plus::before { content: ""; display: block; width: 5px; height: 5px; margin-top: 3px; outline: 1px solid #bbb; outline-offset: -1px; }
input[type="checkbox"] { appearance: none; flex: none; width: 11px; height: 11px; border: 1px solid #dadada; border-radius: 2px; background: #fafafa; }
input[type="checkbox"]:checked { border-color: #eee; background: linear-gradient(45deg, transparent 43%, #000 43% 57%, transparent 57%), linear-gradient(-45deg, transparent 43%, #000 43% 57%, transparent 57%); background-color: #f5f5f5; background-size: 8px 8px; background-position: center; background-repeat: no-repeat; }
.tree label { margin-left: 3px; line-height: 12px; white-space: nowrap; }
.tree .current { flex: 1; margin-left: 2px; padding-left: 1px; line-height: 10px; outline: 1px solid #bbb; text-decoration: underline; }
.sym { flex: none; width: 10px; margin-left: 2px; }
.sym.line { height: 1px; background: #4ea3ee; }
.sym.poly { height: 9px; width: 10px; border: 2px solid #ee2a1b; }
.sym-r { width: 12px; height: 12px; margin-left: 2px; }
.tabs { display: flex; align-items: flex-start; height: 15px; }
.tabs button { padding: 0 9px; height: 14px; line-height: 13px; background: linear-gradient(#f2f2f2, #e2e2e2); border: 1px solid #c3c3c3; border-top: 0; }
.tabs button.on { flex: 1; padding: 0 4px; height: 15px; background: #f4f4f4; line-height: 15px; }

.map { flex: 1; min-width: 0; margin-left: 4px; background: #fff; border: 1px solid #cfcfcf; border-top: 0; border-right: 0; }
.map svg { width: 100%; height: 100%; overflow: visible; }
.coast { fill: none; stroke: #58b0f5; stroke-width: 3.600; }
.scale { fill: none; stroke: #222; }
.sc { font: 10px "Liberation Sans", sans-serif; fill: #222; }
.north { font: 700 5px "Liberation Sans", sans-serif; }

.status { height: 20px; flex: none; display: flex; align-items: center; justify-content: flex-end; gap: 4px; padding-right: 20px; position: relative; }
.toggle { width: 11px; height: 16px; border: 1px solid #b5b5b5; display: grid; place-items: center; }
.toggle svg { width: 9px; height: 9px; }
.status input:not([type]), .status select { height: 14px; border: 1px solid #c4c4c4; background: #fff; padding: 0 2px; border-radius: 2px; }
.status .coord { width: 157px; text-align: center; }
.status select { width: 60px; appearance: none; background-image: conic-gradient(from -45deg at 50% 100%, #222 90deg, transparent 0), linear-gradient(#f2f2f2, #f2f2f2); background-size: 5px 3px, 9px 100%; background-position: right 2px center, right; background-repeat: no-repeat; margin: 0 1px; }
.spin { display: flex; border: 1px solid #c4c4c4; background: #fff; height: 16px; width: 62px; }
.status .spin input { flex: 1; border: 0; }
.spin > span { width: 8px; display: flex; flex-direction: column; background: #f0f0f0; }
.spin button { flex: 1; display: grid; place-items: center; }
.spin button::after { content: ""; border: 2px solid transparent; border-bottom: 3px solid #222; border-top: 0; }
.spin button:last-child::after { transform: rotate(180deg); }
.check { display: flex; align-items: center; gap: 4px; }
.epsg { display: flex; align-items: center; gap: 1px; margin-left: 3px; }
.epsg svg, .msg svg { width: 11px; height: 11px; }
.msg { margin-left: 9px; }
.sizegrip { position: absolute; right: 0; bottom: 0; width: 7px; height: 7px; background: repeating-linear-gradient(135deg, #b5b5b5 0 1px, transparent 1px 3px); clip-path: polygon(100% 0, 100% 100%, 0 100%); }

.taskbar { position: relative; display: flex; background: #262626; border-bottom: 1px solid #000; color: #eee; font: 10px/14px "Open Sans", sans-serif; }
.start { width: 37px; background: #1f1f1f; display: grid; place-items: center; }
.start svg { width: 14px; height: 14px; }
.search { width: 269px; border: 0; background: #333; padding: 0 10px; font-size: 11px; color: #eee; }
.search::placeholder { color: #8f8f8f; opacity: 1; }
.apps { display: flex; margin-left: 1px; }
.apps button { width: 39px; display: grid; place-items: center; position: relative; }
.apps svg { width: 18px; height: 18px; }
.apps .run::after { content: ""; position: absolute; left: 4px; right: 4px; bottom: 0; height: 2px; background: #84b9e2; }
.apps .on { background: #4c4c4c; }
.apps .on::after { left: 0; right: 0; }
.tray { margin-left: auto; display: flex; align-items: center; gap: 6px; }
.tray svg { width: 13px; height: 13px; fill: none; stroke: #ddd; }
.tray span { font-size: 9px; margin-left: 4px; }
.clock { display: flex; flex-direction: column; align-items: center; justify-content: center; margin: 0 2px 0 15px; padding-right: 8px; border-right: 1px solid #555; line-height: 14px; font-size: 9px; }
```
